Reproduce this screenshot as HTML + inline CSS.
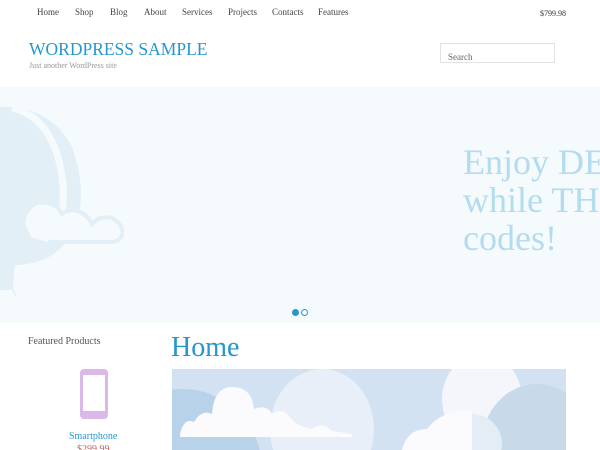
<!DOCTYPE html>
<html><head><style>
*{margin:0;padding:0;box-sizing:border-box}
html,body{width:600px;height:450px;overflow:hidden}
body{background:#fff;font-family:"Liberation Serif",serif;position:relative}
.a{position:absolute;white-space:nowrap}
.nav{font-size:9px;color:#444;top:7px}
#w{position:absolute;left:0;top:0;width:600px;height:450px;overflow:hidden}
</style></head><body><div id="w">
<div class="a nav" style="left:37px">Home</div>
<div class="a nav" style="left:75px">Shop</div>
<div class="a nav" style="left:110px">Blog</div>
<div class="a nav" style="left:144px">About</div>
<div class="a nav" style="left:182px">Services</div>
<div class="a nav" style="left:228px">Projects</div>
<div class="a nav" style="left:272px">Contacts</div>
<div class="a nav" style="left:318px">Features</div>
<div class="a" style="left:540px;top:9px;font-size:8px;color:#333">$799.98</div>
<div class="a" style="left:29px;top:39px;font-size:17.5px;color:#2597cd">WORDPRESS SAMPLE</div>
<div class="a" style="left:29px;top:61px;font-size:8px;color:#999">Just another WordPress site</div>
<div class="a" style="left:440px;top:43px;width:115px;height:20px;border:1px solid #e2e2e2;font-size:9px;color:#666;padding:8px 0 0 7px">Search</div>

<div class="a" style="left:0;top:87px;width:600px;height:236px;background:#f5fafd;overflow:hidden">
<svg width="600" height="236" style="position:absolute;left:0;top:0">
<path d="M0 20 Q50 18 72 60 Q86 100 78 130 Q70 160 45 172 Q25 180 0 178 Z" fill="#e3eff7"/>
<path d="M12 21 Q45 28 58 70 Q66 100 62 125" fill="none" stroke="#f5fafd" stroke-width="7"/>
<path d="M0 178 L14 178 L13 203 L0 203Z" fill="#e3eff7"/>
<path d="M14 178 L12 200 L16 210" fill="none" stroke="#e3eff7" stroke-width="1.5"/>
<path d="M30 150 Q18 135 28 124 Q34 114 45 116 Q56 116 62 127 Q68 122 78 124 Q88 128 92 137 Q100 128 112 131 Q124 138 122 148 Q120 155 110 155 L48 155" fill="#f5fafd" stroke="#e3eff7" stroke-width="4"/>
<path d="M15 143 Q20 152 32 154" fill="none" stroke="#e3eff7" stroke-width="4"/>
</svg>
<div class="a" style="left:463px;top:56px;font-size:36px;line-height:38px;color:#b3dcef">Enjoy DEVELOPING<br>while THEME<br>codes!</div>
<div class="a" style="left:292px;top:222px;width:7px;height:7px;border-radius:50%;background:#2597cd"></div>
<div class="a" style="left:301px;top:222px;width:7px;height:7px;border-radius:50%;border:1px solid #2597cd;background:#fff"></div>
</div>

<div class="a" style="left:28px;top:336px;font-size:10px;color:#555">Featured Products</div>
<div class="a" style="left:80px;top:369px;width:28px;height:50px;border-radius:4px;background:#dcb8ea"></div>
<div class="a" style="left:83px;top:375px;width:22px;height:36px;background:#fff"></div>
<div class="a" style="left:69px;top:431px;font-size:10px;color:#2597cd">Smartphone</div>
<div class="a" style="left:77px;top:444px;height:6px;overflow:hidden;font-size:10px;line-height:12px;color:#d06060">$299.99</div>
<div class="a" style="left:171px;top:332px;font-size:28px;color:#2597cd">Home</div>
<div class="a" style="left:172px;top:369px;width:394px;height:81px;background:#d2e2f2;overflow:hidden">
<svg width="394" height="81" style="position:absolute;left:0;top:0">
<circle cx="10" cy="100" r="80" fill="#b8d2ea"/>
<ellipse cx="150" cy="60" rx="52" ry="60" fill="#e9eff8"/>
<ellipse cx="310" cy="30" rx="40" ry="45" fill="#f4f6fb"/>
<ellipse cx="365" cy="75" rx="55" ry="60" fill="#c8d9ea"/>
<ellipse cx="300" cy="75" rx="30" ry="30" fill="#e4ecf6"/>
<path d="M8 65 Q12 48 22 53 Q30 40 40 45 Q42 18 60 18 Q80 18 82 40 Q95 35 100 45 Q110 38 118 48 Q125 58 140 60 Q150 52 160 62 L180 65 L180 68 L8 68Z" fill="#fbfbfd"/>
<path d="M230 81 Q235 60 255 60 Q270 40 300 42 L300 81Z" fill="#fbfbfd"/>
</svg>
</div>
</div></body></html>
